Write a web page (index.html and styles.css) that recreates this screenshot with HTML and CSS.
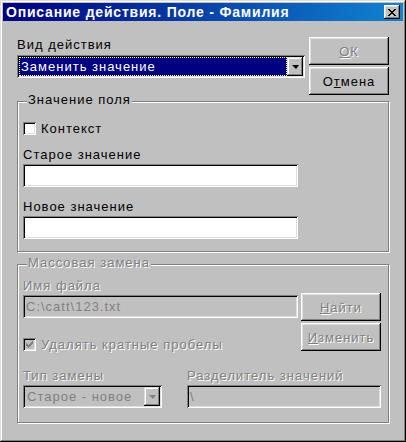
FILE: index.html
```html
<!DOCTYPE html>
<html>
<head>
  <title>Описание действия</title>
  <link rel="stylesheet" href="styles.css">
</head>
<body>
  <div class="window">
    <div class="titlebar">
      <span class="title">Описание действия. Поле - Фамилия</span>
      <span class="close">
        <svg width="8" height="7" viewBox="0 0 8 7" shape-rendering="crispEdges">
          <path d="M0 0h2v1h-2zM6 0h2v1h-2zM1 1h2v1h-2zM5 1h2v1h-2zM2 2h4v1h-4zM3 3h2v1h-2zM2 4h4v1h-4zM1 5h2v1h-2zM5 5h2v1h-2zM0 6h2v1h-2zM6 6h2v1h-2z" fill="#000"/>
        </svg>
      </span>
    </div>

    <div class="content">
      <div class="top-row">
        <div class="action-field">
          <div class="label">Вид действия</div>
          <div class="combo">
            <div class="combo-value selected">Заменить значение</div>
            <div class="combo-btn"><span class="arrow"></span></div>
          </div>
        </div>
        <div class="side-buttons">
          <button class="btn" disabled><u>О</u>К</button>
          <button class="btn">О<u>т</u>мена</button>
        </div>
      </div>

      <div class="group group-value">
        <span class="group-title">Значение поля</span>
        <div class="check">
          <span class="box"></span>
          <span>Контекст</span>
        </div>
        <div class="label field-label">Старое значение</div>
        <div class="input"></div>
        <div class="label field-label">Новое значение</div>
        <div class="input"></div>
      </div>

      <div class="group group-mass disabled">
        <span class="group-title">Массовая замена</span>
        <div class="file-area">
          <div class="file-left">
            <div class="label">Имя файла</div>
            <div class="input input-disabled">C:\catt\123.txt</div>
            <div class="check check-spaced">
              <span class="box box-disabled">
                <svg width="7" height="7" viewBox="0 0 7 7" shape-rendering="crispEdges">
                  <path d="M6 0h1v1h-1zM5 1h2v1h-2zM0 2h1v1h-1zM4 2h3v1h-3zM0 3h2v1h-2zM3 3h3v1h-3zM0 4h5v1h-5zM1 5h3v1h-3zM2 6h1v1h-1z" fill="#808080"/>
                </svg>
              </span>
              <span>Удалять кратные пробелы</span>
            </div>
          </div>
          <div class="file-right">
            <button class="btn" disabled><u>Н</u>айти</button>
            <button class="btn" disabled><u>И</u>зменить</button>
          </div>
        </div>
        <div class="fields-row">
          <div class="field-type">
            <div class="label">Тип замены</div>
            <div class="combo combo-disabled">
              <div class="combo-value">Старое - новое</div>
              <div class="combo-btn"><span class="arrow"></span></div>
            </div>
          </div>
          <div class="field-sep">
            <div class="label">Разделитель значений</div>
            <div class="input input-disabled">\</div>
          </div>
        </div>
      </div>
    </div>
  </div>
</body>
</html>
```

FILE: styles.css
```css
body {
  margin: 0;
  background-color: #c0c0c0;
  font-family: "Liberation Sans", Arial, sans-serif;
  font-size: 13px;
  letter-spacing: 1px;
  color: #000;
}

.window {
  box-sizing: border-box;
  width: 406px;
  height: 442px;
  padding: 3px;
  background-color: #c0c0c0;
  box-shadow: inset -1px -1px #000, inset 1px 1px #dfdfdf, inset -2px -2px #808080, inset 2px 2px #fff;
}

.titlebar {
  height: 18px;
  display: flex;
  align-items: center;
  justify-content: space-between;
  padding: 0 3px 0 3px;
  background: linear-gradient(to right, #000080, #1084d0);
  color: #fff;
  font-weight: bold;
  font-size: 14px;
  letter-spacing: 0.8px;
}

.close {
  width: 16px;
  height: 14px;
  display: flex;
  align-items: center;
  justify-content: center;
  background-color: #c0c0c0;
  box-shadow: inset -1px -1px #000, inset 1px 1px #fff, inset -2px -2px #808080, inset 2px 2px #dfdfdf;
}

.content {
  padding: 16px 14px 0;
}

.label {
  height: 14px;
  line-height: 14px;
  margin-bottom: 2px;
  white-space: nowrap;
}

.top-row {
  display: flex;
  gap: 4px;
}

.action-field {
  width: 288px;
  padding-top: 1px;
}

.action-field .label {
  margin-bottom: 3px;
}

.combo {
  box-sizing: border-box;
  height: 23px;
  display: flex;
  padding: 2px;
  background-color: #fff;
  box-shadow: inset 1px 1px #808080, inset -1px -1px #fff, inset 2px 2px #000, inset -2px -2px #dfdfdf;
}

.combo-value {
  flex: 1;
  padding-left: 2px;
  line-height: 19px;
  white-space: nowrap;
}

.combo-value.selected {
  background-color: #000080;
  color: #fff;
  outline: 1px dotted #ffff80;
  outline-offset: -1px;
}

.combo-btn {
  width: 16px;
  display: flex;
  align-items: center;
  justify-content: center;
  background-color: #c0c0c0;
  box-shadow: inset -1px -1px #000, inset 1px 1px #dfdfdf, inset -2px -2px #808080, inset 2px 2px #fff;
}

.arrow {
  width: 0;
  height: 0;
  border-left: 4px solid transparent;
  border-right: 3px solid transparent;
  border-top: 4px solid #000;
  margin-top: 1px;
}

.side-buttons,
.file-right {
  width: 80px;
  display: flex;
  flex-direction: column;
  gap: 2px;
}

.btn {
  height: 28px;
  padding: 0;
  border: none;
  font: inherit;
  letter-spacing: 1px;
  color: #000;
  background-color: #c0c0c0;
  box-shadow: inset -1px -1px #000, inset 1px 1px #fff, inset -2px -2px #808080, inset 2px 2px #dfdfdf;
}

.btn:disabled,
.disabled .label,
.disabled .group-title,
.disabled .check {
  color: #808080;
  text-shadow: 1px 1px 0 #fff;
}

.group {
  position: relative;
  border: 1px solid #808080;
  box-shadow: inset 1px 1px #fff, 1px 1px #fff;
  padding: 0 5px;
}

.group-title {
  position: absolute;
  top: -9px;
  left: 9px;
  padding: 0 1px;
  line-height: 14px;
  background-color: #c0c0c0;
}

.group-value {
  margin-top: 6px;
  padding-top: 19px;
  padding-bottom: 12px;
}

.group-mass {
  margin-top: 12px;
  padding-top: 14px;
  padding-bottom: 14px;
}

.check {
  height: 14px;
  display: flex;
  align-items: center;
  gap: 5px;
}

.box {
  box-sizing: border-box;
  width: 13px;
  height: 13px;
  display: flex;
  align-items: center;
  justify-content: center;
  background-color: #fff;
  box-shadow: inset 1px 1px #808080, inset -1px -1px #fff, inset 2px 2px #000, inset -2px -2px #dfdfdf;
}

.box-disabled {
  background-color: #c0c0c0;
}

.field-label {
  margin-top: 13px;
}

.input {
  box-sizing: border-box;
  width: 275px;
  height: 23px;
  padding: 2px 3px;
  line-height: 19px;
  background-color: #fff;
  box-shadow: inset 1px 1px #808080, inset -1px -1px #fff, inset 2px 2px #000, inset -2px -2px #dfdfdf;
  white-space: nowrap;
}

.input-disabled,
.combo-disabled {
  background-color: #c0c0c0;
  color: #808080;
}

.combo-disabled .arrow {
  border-top-color: #808080;
}

.file-area {
  display: flex;
  gap: 3px;
}

.file-left {
  width: 275px;
}

.file-right {
  padding-top: 14px;
}

.check-spaced {
  margin-top: 19px;
}

.fields-row {
  display: flex;
  gap: 25px;
  margin-top: 18px;
}

.field-type {
  width: 139px;
}

.field-sep {
  width: 194px;
}

.field-sep .input {
  width: 194px;
}
```
